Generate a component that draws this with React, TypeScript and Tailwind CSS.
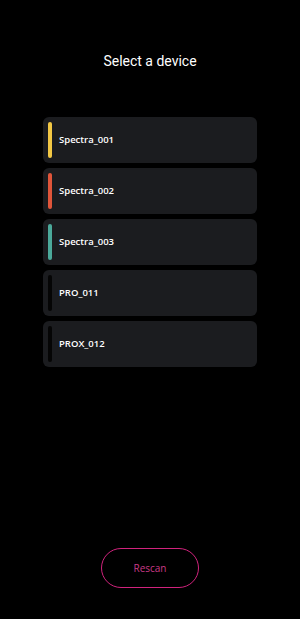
import React from "react";

const devices = [
  { name: "Spectra_001", color: "bg-[#f2c744]" },
  { name: "Spectra_002", color: "bg-[#e0553a]" },
  { name: "Spectra_003", color: "bg-[#4ba99a]" },
  { name: "PRO_011", color: "bg-[#050505]" },
  { name: "PROX_012", color: "bg-[#050505]" },
];

export default function App() {
  return (
    <div className="w-[300px] h-[619px] bg-black flex flex-col items-center" style={{ fontFamily: "Roboto, sans-serif" }}>
      <h1 className="mt-[52px] h-[18px] leading-[18px] text-[14px] text-white font-normal">Select a device</h1>
      <div className="mt-[47px] w-[214px] flex flex-col gap-[5px]">
        {devices.map((d) => (
          <div key={d.name} className="h-[46px] rounded-[6px] bg-[#1b1c1f] flex items-center px-[5px]">
            <div className={`w-[4px] h-[36px] rounded-full ${d.color}`} />
            <span className="ml-[7px] text-[9.5px] text-white font-semibold" style={{ fontFamily: "'Open Sans', sans-serif" }}>{d.name}</span>
          </div>
        ))}
      </div>
      <div className="flex-1" />
      <button className="mb-[31px] w-[98px] h-[40px] rounded-full border border-[#d1237d] text-[#c93a86] text-[10px]" style={{ fontFamily: "'Open Sans', sans-serif" }}>Rescan</button>
    </div>
  );
}
